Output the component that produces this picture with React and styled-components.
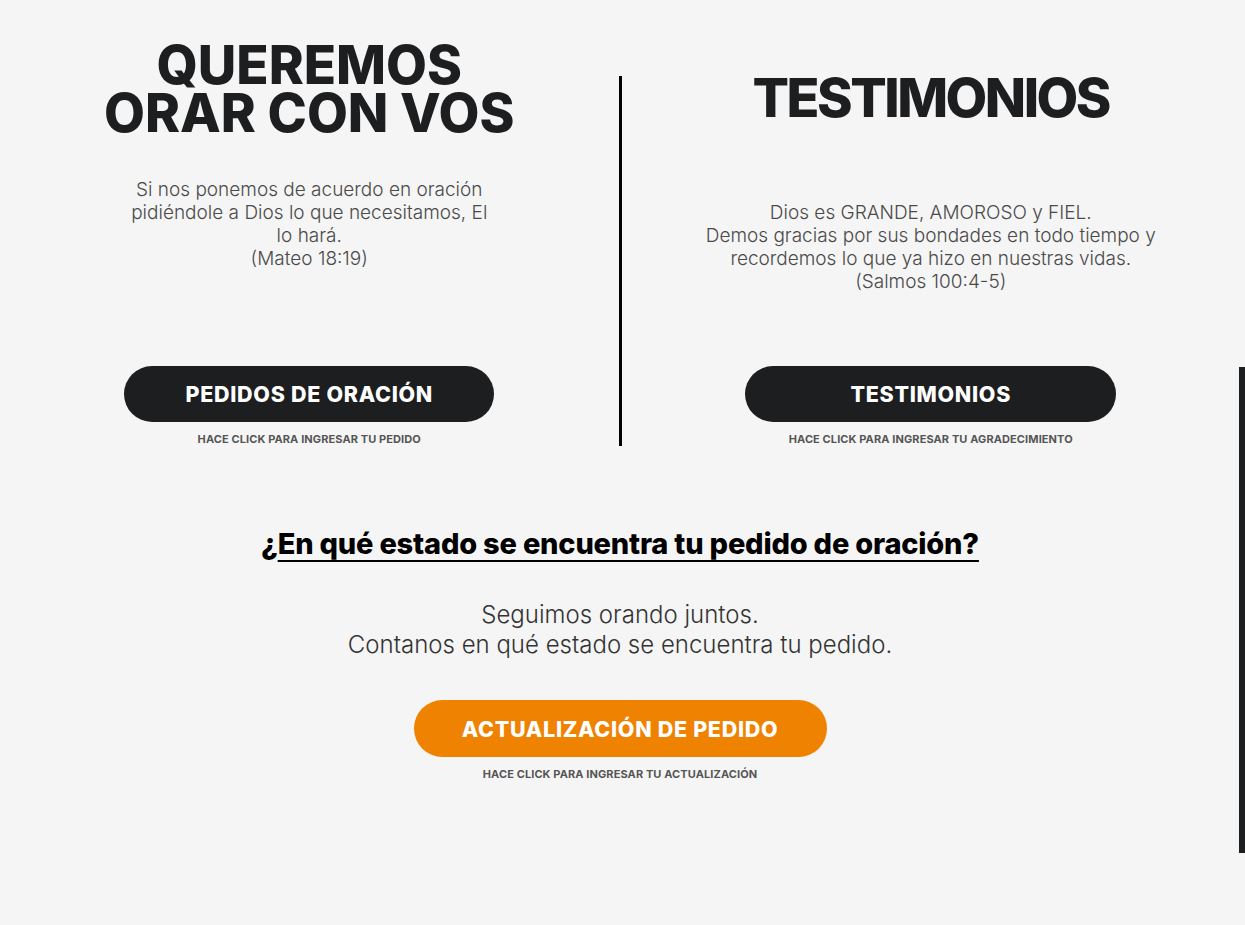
import React from 'react';
import styled, { createGlobalStyle } from 'styled-components';

const GlobalStyle = createGlobalStyle`
  html, body {
    margin: 0;
    padding: 0;
    background: #f5f5f5;
  }
  body {
    font-family: Inter, "Open Sans", sans-serif;
    color: #1d1e20;
  }
`;

const Page = styled.div`
  width: 1240px;
  min-height: 925px;
  position: relative;
`;

const Top = styled.section`
  display: grid;
  grid-template-columns: 1fr 3px 1fr;
  padding-top: 41px;
`;

const Column = styled.div`
  display: flex;
  flex-direction: column;
  align-items: center;
  text-align: center;
`;

const Divider = styled.div`
  background: #000;
  margin-top: 35px;
  height: 370px;
`;

const Title = styled.h1`
  margin: 0;
  font-family: Inter, sans-serif;
  font-weight: 800;
  font-size: ${p => p.$size}px;
  line-height: ${p => p.$lh}px;
  letter-spacing: ${p => p.$ls}px;
  color: #1d1e20;
  height: ${p => p.$boxH}px;
  padding-top: ${p => p.$offset}px;
  box-sizing: border-box;
`;

const Verse = styled.p`
  margin: 0;
  width: ${p => p.$w}px;
  font-size: 19px;
  line-height: 23px;
  font-weight: 300;
  color: #4a4a4a;
  height: ${p => p.$h}px;
`;

const PillButton = styled.a`
  display: flex;
  align-items: center;
  justify-content: center;
  width: ${p => p.$w}px;
  height: ${p => p.$h}px;
  border-radius: 30px;
  background: ${p => (p.$orange ? '#ef8200' : '#1d1e20')};
  color: #fff;
  font-weight: 800;
  font-size: 21.5px;
  letter-spacing: 0.7px;
  text-decoration: none;
  cursor: pointer;
`;

const Hint = styled.div`
  margin-top: 10px;
  font-size: 11px;
  font-weight: 700;
  color: #555;
  letter-spacing: 0.1px;
`;

const Status = styled.section`
  display: flex;
  flex-direction: column;
  align-items: center;
  text-align: center;
  padding-top: 80px;
`;

const StatusTitle = styled.h2`
  margin: 0;
  font-size: 29px;
  font-weight: 800;
  line-height: 36px;
  color: #000;
  letter-spacing: -0.2px;
  u {
    text-decoration-thickness: 2px;
    text-underline-offset: 6px;
  }
`;

const StatusText = styled.p`
  margin: 38px 0 40px;
  font-size: 24px;
  line-height: 30px;
  font-weight: 300;
  color: #333;
`;

const SideTab = styled.div`
  position: fixed;
  right: 0;
  top: 367px;
  width: 6px;
  height: 486px;
  background: #1d1e20;
`;

export default function App() {
  return (
    <Page>
      <GlobalStyle />
      <Top>
        <Column>
          <Title $size={53} $lh={48} $ls={0} $boxH={137} $offset={0}>
            QUEREMOS
            <br />
            ORAR CON VOS
          </Title>
          <Verse $w={364} $h={188}>
            Si nos ponemos de acuerdo en oración pidiéndole a Dios lo que necesitamos, El lo hará.
            <br />
            (Mateo 18:19)
          </Verse>
          <PillButton $w={370} $h={56}>PEDIDOS DE ORACIÓN</PillButton>
          <Hint>HACE CLICK PARA INGRESAR TU PEDIDO</Hint>
        </Column>
        <Divider />
        <Column>
          <Title $size={54} $lh={64} $ls={-2.5} $boxH={160} $offset={25}>
            TESTIMONIOS
          </Title>
          <Verse $w={480} $h={165}>
            Dios es GRANDE, AMOROSO y FIEL.
            <br />
            Demos gracias por sus bondades en todo tiempo y recordemos lo que ya hizo en nuestras vidas.
            <br />
            (Salmos 100:4-5)
          </Verse>
          <PillButton $w={371} $h={56}>TESTIMONIOS</PillButton>
          <Hint>HACE CLICK PARA INGRESAR TU AGRADECIMIENTO</Hint>
        </Column>
      </Top>
      <Status>
        <StatusTitle>
          ¿<u>En qué estado se encuentra tu pedido de oración?</u>
        </StatusTitle>
        <StatusText>
          Seguimos orando juntos.
          <br />
          Contanos en qué estado se encuentra tu pedido.
        </StatusText>
        <PillButton $orange $w={413} $h={57}>ACTUALIZACIÓN DE PEDIDO</PillButton>
        <Hint>HACE CLICK PARA INGRESAR TU ACTUALIZACIÓN</Hint>
      </Status>
      <SideTab />
    </Page>
  );
}
